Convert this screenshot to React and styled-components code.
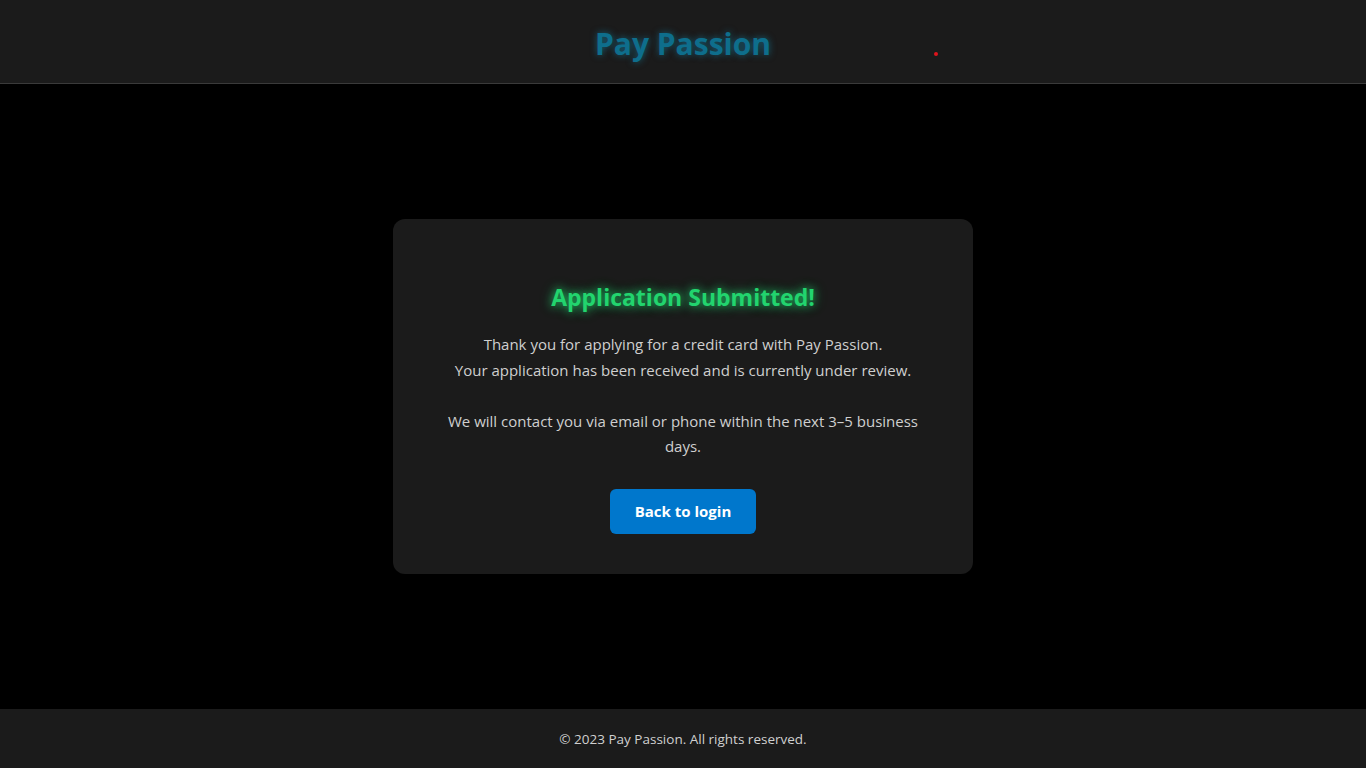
import React from 'react';
import styled, { createGlobalStyle } from 'styled-components';

const GlobalStyle = createGlobalStyle`
 html, body {
     margin: 0;
     padding: 0;
     background: #000;
     font-family: "Segoe UI", "Open Sans", "Noto Sans", sans-serif;
 }
 #root {
     min-height: 100vh;
 }
`

function App() {
    return (
        <Page>
            <GlobalStyle />
            <Header>
                <Logo>Pay Passion</Logo>
                <Dot />
            </Header>
            <Main>
                <Card>
                    <h2>Application Submitted!</h2>
                    <p>
                        Thank you for applying for a credit card with Pay Passion.<br />
                        Your application has been received and is currently under review.<br /><br />
                        We will contact you via email or phone within the next 3–5 business days.
                    </p>
                    <button>Back to login</button>
                </Card>
            </Main>
            <Footer>© 2023 Pay Passion. All rights reserved.</Footer>
        </Page>
    )
}

const Page = styled.div`
 min-height: 100vh;
 display: flex;
 flex-direction: column;
 background: #000;
`

const Header = styled.header`
 position: relative;
 height: 83px;
 display: flex;
 align-items: center;
 justify-content: center;
 background-color: #1b1b1b;
 border-bottom: 1px solid #3a3a3a;
`

const Logo = styled.h1`
 margin: 4px 0 0;
 font-size: 30px;
 font-weight: 700;
 color: #0e6e8c;
 text-shadow: 0 0 7px rgba(20, 140, 180, 0.6);
`

const Dot = styled.span`
 position: absolute;
 left: 934px;
 top: 52px;
 width: 4px;
 height: 4px;
 border-radius: 50%;
 background: #e0141c;
`

const Main = styled.main`
 flex: 1;
 display: flex;
 align-items: center;
 justify-content: center;
`

const Card = styled.div`
 width: 580px;
 box-sizing: border-box;
 padding: 40px 50px;
 background-color: #1b1b1b;
 border-radius: 12px;
 text-align: center;

 h2{
     margin: 22px 0 19px;
     font-size: 23px;
     font-weight: 700;
     color: #22d46e;
     text-shadow: 0 0 8px rgba(34, 212, 110, 0.8), 0 0 14px rgba(34, 212, 110, 0.45);
 }

 p{
     margin: 0 0 29px;
     font-size: 15px;
     line-height: 25.6px;
     color: #cfcfcf;
 }

 button{
     width: 146px;
     height: 45px;
     font-family: inherit;
     font-size: 15px;
     font-weight: 700;
     color: #fff;
     background-color: #0077cc;
     border: none;
     border-radius: 6px;
     cursor: pointer;
 }
`

const Footer = styled.footer`
 height: 59px;
 display: flex;
 align-items: center;
 justify-content: center;
 background-color: #1b1b1b;
 font-size: 13.5px;
 color: #d0d0d0;
`

export default App
